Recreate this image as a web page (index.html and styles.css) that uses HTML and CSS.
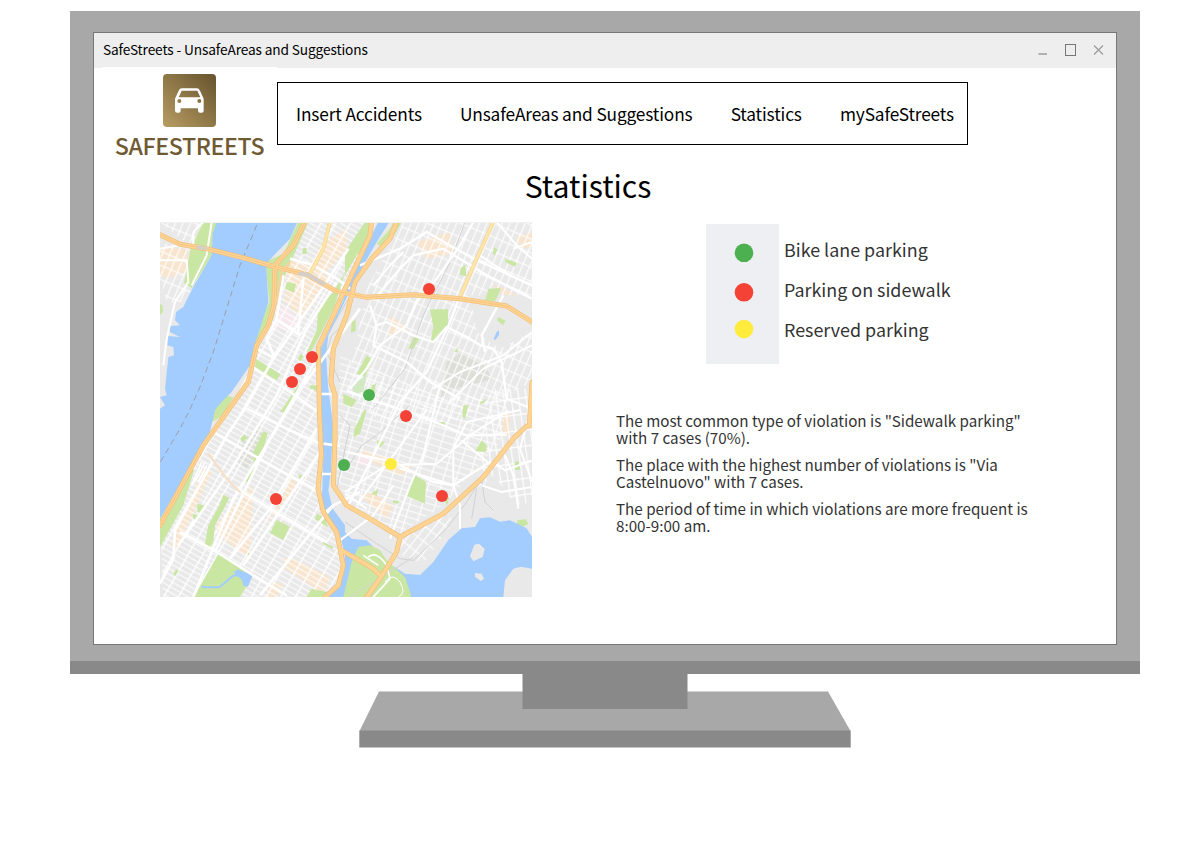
FILE: index.html
```html
<!DOCTYPE html>
<html lang="en">
<head>
<meta charset="utf-8">
<title>SafeStreets - UnsafeAreas and Suggestions</title>
<link rel="stylesheet" href="styles.css">
</head>
<body>
<div class="monitor">
  <div class="bezel">
    <div class="window">
      <header class="titlebar">
        <span class="window-title">SafeStreets - UnsafeAreas and Suggestions</span>
        <svg class="controls" width="66" height="14" viewBox="0 0 66 14">
          <path d="M0.500 11H9" stroke="#b0b0b0" stroke-width="2"/>
          <rect x="27.500" y="1.500" width="10" height="11" fill="none" stroke="#777"/>
          <path d="M56 2.500l9 9M65 2.500l-9 9" stroke="#999" stroke-width="1.100"/>
        </svg>
      </header>
      <div class="top">
        <div class="logo">
          <svg class="logo-icon" width="53" height="53" viewBox="0 0 159 159">
            <defs><linearGradient id="gold" x1="0" y1="1" x2="1" y2="0"><stop offset="0" stop-color="#b89d63"/><stop offset="1" stop-color="#66522d"/></linearGradient></defs>
            <rect width="159" height="159" rx="12" fill="url(#gold)"/>
            <path fill="#fff" fill-rule="evenodd" d="M57 43H101Q108 43 111 50L122 74V110Q122 116 116 116H111Q105 116 105 110V103H53V110Q53 116 47 116H43Q36 116 36 110V74L47 50Q50 43 57 43ZM56 50L47 70H112L103 50ZM49 75a6 6 0 1 0 0 12a6 6 0 1 0 0-12ZM109 75a6 6 0 1 0 0 12a6 6 0 1 0 0-12Z"/>
          </svg>
          <span class="logo-name">SAFESTREETS</span>
        </div>
        <nav class="nav">
          <a>Insert Accidents</a>
          <a>UnsafeAreas and Suggestions</a>
          <a>Statistics</a>
          <a>mySafeStreets</a>
        </nav>
      </div>
      <h1 class="heading">Statistics</h1>
      <main class="content">
        <svg class="map" width="372" height="375" viewBox="0 0 1116 1125">
          <defs>
            <pattern id="uptown" width="38" height="15" patternUnits="userSpaceOnUse" patternTransform="rotate(30)"><path d="M0 2H38" stroke="#fff" stroke-width="2.800"/><path d="M2 0V15" stroke="#fff" stroke-width="4"/></pattern>
            <pattern id="bronx" width="21" height="39" patternUnits="userSpaceOnUse" patternTransform="rotate(23)"><path d="M0 2H21M2 0V39" stroke="#fff" stroke-width="3.200"/></pattern>
            <pattern id="south" width="37" height="19" patternUnits="userSpaceOnUse" patternTransform="rotate(17)"><path d="M0 2H37M2 0V19" stroke="#fff" stroke-width="3.200"/></pattern>
            <pattern id="east" width="22" height="48" patternUnits="userSpaceOnUse" patternTransform="rotate(-8)"><path d="M0 2H22M2 0V48" stroke="#fff" stroke-width="3.400"/></pattern>
            <pattern id="steep" width="22" height="38" patternUnits="userSpaceOnUse" patternTransform="rotate(38)"><path d="M0 2H22M2 0V38" stroke="#fff" stroke-width="3.200"/></pattern>
          </defs>
          <rect width="1116" height="1125" fill="#e9e9e9"/>

          <!-- Commercial blocks -->
          <g fill="#f8e5cf">
            <path d="M0 75L85 82L75 150L20 170L0 160ZM385 118L455 120L510 170L450 265L415 280L375 240ZM480 70L560 20V80L500 150L455 130ZM390 210H450L440 265H400ZM170 905L280 790L270 1010L175 940ZM370 1010L390 1005L510 1065L490 1115L370 1035ZM130 740L155 750L50 980L30 970ZM330 1080L370 1085L350 1125H320ZM355 845L400 760L410 790L300 930Z"/>
            <path d="M770 60L870 30L875 95L800 110ZM690 280L745 320L690 345ZM1070 45L1116 30V75L1080 80ZM1000 185L1116 240V260L1010 205ZM605 680L760 740L715 760L610 705ZM600 820L640 810L700 855L680 890ZM1030 570H1050V640H1025Z"/>
          </g>
          <path d="M345 240L415 285L410 330L345 315ZM595 690L630 705L620 735L590 720Z" fill="#f6e8ed"/>
          <path d="M860 420L900 395L970 430L1000 470L870 505L840 540ZM250 650L300 615L315 650L260 745L235 720Z" fill="#deded9"/>

          <!-- Street grids -->
          <path d="M380 70L420 0H650L545 205L450 390L470 430V650L490 900L550 970L540 1060L490 1125H10L0 880L110 710L210 560L280 420L345 280V160Z" fill="url(#uptown)"/>
          <path d="M620 200L730 0H1116V480L880 600H660L560 500L600 300Z" fill="url(#bronx)"/>
          <path d="M540 400L680 470L870 530L1050 500L1020 660L850 850L710 940L560 850L530 760Z" fill="url(#south)"/>
          <path d="M1000 500H1116V840L1070 850L1000 760L960 800L950 720Z" fill="url(#east)"/>
          <path d="M730 930L860 865L880 900L790 1025L700 990Z" fill="url(#steep)"/>
          <path d="M930 220H1116V330L1020 380L950 330Z" fill="#e9e9e9"/>
          <path d="M0 60L100 85V240H20L0 170M0 0H130L100 80Z" fill="url(#bronx)"/>

          <!-- Parks -->
          <g fill="#cae6a3">
            <path d="M130 0H170L155 100L95 198L72 182L92 80ZM316 120L370 95L415 0H445L375 160L360 200L340 290L285 370V330L328 240ZM380 180L408 185L402 212L375 200ZM430 78h10v18h-14ZM0 245l8 6v20L0 278Z"/>
            <path d="M555 150L520 210L475 255L470 325L440 390L455 385L485 330L525 250ZM288 410L362 457L350 475L285 435ZM415 490L420 500L380 570H360ZM450 490L470 490L475 510L450 498ZM165 560L190 520L220 525L190 580L155 600ZM420 395l12 8-10 15-8-5Z"/>
            <path d="M555 90L615 0H635L630 60L590 100L555 160ZM650 65L690 20L700 0H725L700 45L665 75ZM810 262H864V310L825 357H812L820 315ZM985 200L1020 198L1022 203L1005 238L975 235ZM902 138l14-10 3 35-20-5ZM1035 110l35 12-5 12-28-13ZM1015 285l22 12-8 12-18-14ZM1003 75l10 8-10 18-5-8ZM575 300l12-8v35l-14 5ZM620 400L638 412L615 465L590 455ZM745 380l15-35 18 5-18 30ZM636 490l12-5-5 25-12-2ZM550 515L590 535L575 555L550 545ZM910 550h15l-10 40-8-5ZM960 540l20-10-8 12-14 5ZM883 390l10-15v15Z"/>
            <path d="M310 628L323 634L300 720L262 782L257 778L280 730V690ZM190 818L208 828L165 910L160 960L150 976L135 965L145 910L178 850ZM175 996L280 1060L240 1125H102ZM350 893L389 914L370 954L330 934ZM0 890L90 735L102 745L70 850L0 975ZM112 845l20 5-5 25-15-5ZM98 875l20 5-5 15-13-4ZM240 650l12-13 11 10-15 12ZM415 757l20 5-2 10-15-3ZM470 875l25 12 10 30-40-25ZM455 1100l45 10v15h-60ZM360 590l20-28h8l-18 30ZM48 1042l8 5-10 15-6-5ZM510 600L525 610L522 700L508 680ZM490 960l30 15-3 7-30-17ZM265 993l9 2-3 10-8-2Z"/>
            <path d="M765 760L798 780L795 845L740 822L750 800ZM965 655L980 670L978 690L945 688ZM583 620L613 564H620L600 635L580 645ZM640 810l15-8-5 20-15-6ZM650 655l25 5-10 12-14 5ZM855 840l6-20 6 5-4 25ZM1064 720l12-2 5 25-15 2ZM1072 895l25-4 8 15-25 12-10-8ZM945 745l12-8v8l-10 7ZM700 835l18 2-4 8-16-3ZM842 600h13l-3 12-12-5Z"/>
          </g>
          <path d="M573 490L620 460L610 510L582 515Z" fill="#d3e9c5"/>

          <!-- Rivers and bay -->
          <g fill="#a3ccff">
            <path d="M170 0H412L390 50L318 125L325 240L300 320L285 365L270 430L215 510L185 540L165 564L145 650L100 720L0 890V560L15 550L0 525L20 520L15 500L25 405L42 400L40 375L22 370L25 342L60 345L30 330V312L60 310L45 295L48 270L70 255L98 198L155 100L158 35Z"/>
            <path d="M655 0H688L650 60L610 130L565 215L530 290L505 340L498 400L505 500L518 600L513 750L505 805L518 860L555 910V930L575 950L620 955L655 990L680 1020L735 1055L780 1059L820 1020L865 954L905 919L945 915L960 889L990 886L1020 899L1050 895L1100 919L1116 945V1125H500L545 1065L555 1000L540 940L485 850L490 700L475 560L475 395L510 320L550 235L570 165L620 70Z"/>
            <path d="M1010 330l7-5v15l-12 15-4-5ZM222 1052l10-10 20 8 12 4 14 6-14 34-14-3-4-18-14-10Z"/>
          </g>
          <path d="M125 1093l8 3 45 0 22-18 18-16 14-3" fill="none" stroke="#a3ccff" stroke-width="6"/>
          <path d="M575 1020L595 975L630 970L660 985L680 1015L735 1065L752 1115V1125H550Z" fill="#cae6a3"/>
          <path d="M930 1003L943 968L957 965L974 980L968 1005L940 1018ZM945 1053l20 2 7 15-10 7-17-13ZM1030 1125L1035 1075L1060 1040L1083 1034L1116 1040V1125Z" fill="#e9e9e9"/>
          <path d="M290 10L240 130L160 390L120 495L90 562L60 620L0 722" fill="none" stroke="#9b9fa8" stroke-width="3" stroke-dasharray="18 12"/>

          <!-- Railways -->
          <g fill="none" stroke="#d2d2d2" stroke-width="3">
            <path d="M915 0L870 120L790 280L735 440L640 560M750 550L650 640L605 670L570 725M555 900L650 965L720 1010L760 1015L860 920L920 840L990 730M950 800L935 890M965 775L975 840L1000 865M570 1125L760 1005"/>
            <path d="M560 300L515 340L500 390L540 480M540 580L570 610L530 800L570 860M565 230L525 300"/>
          </g>

          <!-- Avenues and main streets -->
          <g fill="none" stroke="#fff" stroke-width="8" stroke-linejoin="round">
            <path d="M0 115H80L85 180L45 240L20 350L10 430M100 70V30L130 0M155 0L140 100L95 190M0 80L85 65" stroke-width="6"/>
            <path d="M565 80L480 210L340 410L255 560L200 640L45 925L40 1010L0 1085M530 180L440 320L350 520L215 740L55 970M600 260L430 490L220 830L100 1125M470 410L330 650L165 990M470 620L330 860L210 1010M480 690L250 1030M520 850L300 1120M430 170L415 330M370 160L350 290L320 350L345 410M290 380L345 410M345 290L420 340"/>
            <path d="M270 430L390 510L475 570M260 560L380 620L480 665M160 630L350 740L480 810M60 930L170 990L280 1060L380 1120M230 800L330 860L500 960M390 110L460 130L530 170L570 200M490 665L540 672M485 756H520M485 880L520 850L600 810M480 516H520"/>
            <path d="M570 500L620 440L660 370L740 310L770 240L830 170L900 70L940 0M560 860L650 680L720 540L800 450L870 300L900 220M600 130L720 80L800 30L940 110L1116 190M640 235L720 140L760 100L850 80L980 160L1116 230M630 250L650 310L640 370L740 420L810 480L900 530M650 310L680 300L760 340L820 360L860 315L930 350L960 370L1000 380L1025 420L1040 530L1116 560M975 390L965 340L1030 220M570 510L650 540L790 585L920 640L1040 638M560 690L700 720L820 780L880 790L990 720" stroke-width="7"/>
            <path d="M590 850L700 700L780 590L800 564M690 950L750 790L790 700L840 490M820 500L900 450L1030 400L1116 330M870 540L970 440L1116 370M555 810L680 730L830 725L930 640L1045 565M880 800V680L920 600L1080 564M1000 720L1035 745L1116 715M965 790L1025 810L1116 795M1035 700L1060 760L1075 860M910 660L1000 735M900 920V850L880 790L720 740" stroke-width="6"/>
            <path d="M1010 0L1070 70L1116 110M1060 80L1116 60M960 100L1050 160L1116 190M730 90L690 130L640 190M1110 570L1080 680L1116 780M560 505L650 540M540 955L640 880L700 790M555 815L620 860" stroke-width="6"/>
            <path d="M625 1005Q650 985 680 1030L690 1070L640 1125M610 1000l45 30" stroke-width="5"/>
            <path d="M675 1080q20-30 45 0q20 35-5 45" stroke-width="3"/>
            <path d="M125 720L95 790L110 770L135 720M115 780l25-50" stroke-width="5"/>
          </g>

          <!-- Highways -->
          <g fill="none" stroke-linejoin="round" stroke-linecap="round">
            <g stroke="#efd08e" stroke-width="11"><path d="M510 0L490 80L450 155M1000 0L950 110L900 225"/></g>
            <g stroke="#ffe6a6" stroke-width="8"><path d="M510 0L490 80L450 155M1000 0L950 110L900 225"/></g>
            <g stroke="#f0bd7a" stroke-width="15">
              <path d="M0 38L60 67L140 80L260 110L340 133L440 158L530 208L620 226L760 218L900 230L1040 252L1116 300"/>
              <path d="M435 0L400 70L345 130L342 250L325 310L290 370L265 480L205 564L130 670L95 735L0 910"/>
              <path d="M710 0L690 50L635 110L585 180L560 280L520 380L513 480L525 520V650L520 790L560 850L630 890L720 945L850 875L970 765L1060 650L1100 612L1116 610M1108 612L1116 480"/>
              <path d="M635 0L630 40L560 190L520 280L475 375L478 560L484 700L474 800L490 870L530 930L550 1030L535 1090L495 1125M545 985L640 1040L660 1060M720 945L710 990L660 1070L620 1125"/>
            </g>
            <g stroke="#ffd493" stroke-width="11">
              <path d="M0 38L60 67L140 80L260 110L340 133L440 158L530 208L620 226L760 218L900 230L1040 252L1116 300"/>
              <path d="M435 0L400 70L345 130L342 250L325 310L290 370L265 480L205 564L130 670L95 735L0 910"/>
              <path d="M710 0L690 50L635 110L585 180L560 280L520 380L513 480L525 520V650L520 790L560 850L630 890L720 945L850 875L970 765L1060 650L1100 612L1116 610M1108 612L1116 480"/>
              <path d="M635 0L630 40L560 190L520 280L475 375L478 560L484 700L474 800L490 870L530 930L550 1030L535 1090L495 1125M545 985L640 1040L660 1060M720 945L710 990L660 1070L620 1125"/>
            </g>
            <path d="M390 120L365 150L350 240" stroke="#f8d19b" stroke-width="6"/>
            <g stroke="#f0bd7a" stroke-width="2"><path d="M0 38L60 67L140 80L260 110L340 133L440 158L530 208L620 226L760 218L900 230L1040 252L1116 300M435 0L400 70L345 130L342 250L325 310L290 370L265 480L205 564L130 670L0 910"/></g>
            <path d="M115 76l20 3M420 155L445 158L490 185" stroke="#d4d0c8" stroke-width="12"/>
            <path d="M145 695L200 770L240 810" stroke="#f6dfc4" stroke-width="6"/>
          </g>
          <path d="M0 1.500H1116" stroke="#f1f1f1" stroke-width="3"/>

          <!-- Reported violations -->
          <g fill="#f44336"><circle cx="807" cy="201" r="18"/><circle cx="456" cy="405" r="18"/><circle cx="420" cy="441" r="18"/><circle cx="396" cy="480" r="18"/><circle cx="738" cy="582" r="18"/><circle cx="348" cy="831" r="18"/><circle cx="846" cy="822" r="18"/></g>
          <g fill="#4caf50"><circle cx="627" cy="519" r="18"/><circle cx="552" cy="729" r="18"/></g>
          <circle cx="693" cy="726" r="18" fill="#ffeb3b"/>
        </svg>
        <div class="info">
          <section class="legend">
            <svg class="swatches" width="73" height="140" viewBox="0 0 73 140">
              <circle cx="38" cy="28.800" r="9.300" fill="#4caf50"/>
              <circle cx="38" cy="68.300" r="9.300" fill="#f44336"/>
              <circle cx="38" cy="105" r="9.300" fill="#ffeb3b"/>
            </svg>
            <ul class="labels"><li>Bike lane parking</li><li>Parking on sidewalk</li><li>Reserved parking</li></ul>
          </section>
          <section class="summary">
            <p>The most common type of violation is "Sidewalk parking"<br>with 7 cases (70%).</p>
            <p>The place with the highest number of violations is "Via<br>Castelnuovo" with 7 cases.</p>
            <p>The period of time in which violations are more frequent is<br>8:00-9:00 am.</p>
          </section>
        </div>
      </main>
    </div>
  </div>
  <svg class="stand" width="492" height="74" viewBox="0 0 492 74">
    <path d="M20 17.500H469L491.500 57H0.500Z" fill="#a8a8a8"/>
    <path d="M0.300 56.500H491.700V73.500H0.300Z" fill="#898989"/>
    <path d="M163.500 0H328.500V35H163.500Z" fill="#898989"/>
  </svg>
</div>
</body>
</html>
```

FILE: styles.css
```css
* { box-sizing: border-box; }
body {
  margin: 0;
  background: #fff;
  color: #000;
  font-family: "Noto Sans CJK SC", "Noto Sans", sans-serif;
  white-space: nowrap;
}
.monitor {
  width: 1070px;
  margin: 11px 0 0 70px;
  display: flex;
  flex-direction: column;
  align-items: center;
}
.bezel {
  width: 1070px;
  height: 663px;
  padding: 21px 23px 0;
  background: #a8a8a8;
  border-bottom: 13px solid #898989;
}
.window {
  width: 1024px;
  height: 613px;
  background: #fff;
  border: 1px solid #777;
}
.titlebar {
  height: 35px;
  padding: 0 12px 2px 9px;
  display: flex;
  align-items: center;
  justify-content: space-between;
  background: #eee;
}
.window-title { font-size: 13.7px; line-height: 33px; letter-spacing: -0.13px; }
.top { display: flex; height: 94px; }
.logo {
  width: 175px;
  margin: -1px 0 0 8px;
  padding-top: 7px;
  display: flex;
  flex-direction: column;
  align-items: center;
  background: #fff;
}
.logo-icon { flex: none; }
.logo-name {
  margin-top: 3px;
  font-size: 23.2px;
  font-weight: 500;
  line-height: 30px;
  letter-spacing: -0.4px;
  color: #6f5a33;
}
.nav {
  width: 691px;
  height: 63px;
  margin-top: 14px;
  padding: 0 13px 0 18px;
  display: flex;
  align-items: center;
  justify-content: space-between;
  border: 1px solid #000;
  font-size: 17.3px;
  line-height: 26px;
  letter-spacing: -0.14px;
}
.heading {
  margin: 0;
  padding-right: 34px;
  height: 60px;
  font-size: 30.2px;
  line-height: 46px;
  font-weight: 400;
  text-align: center;
}
.content { display: flex; padding-left: 66px; }
.map { flex: none; display: block; }
.info { padding: 2px 0 0 84px; color: #333; }
.legend { display: flex; margin-left: 90px; height: 140px; }
.swatches { flex: none; background: #eeeff3; }
.labels {
  margin: 0;
  padding: 5px 0 0 5px;
  list-style: none;
  font-size: 17.9px;
  line-height: 40px;
}
.summary { margin-top: 48px; font-size: 15.2px; line-height: 17px; }
.summary p { margin: 0 0 10px; }
.stand { display: block; }
```
